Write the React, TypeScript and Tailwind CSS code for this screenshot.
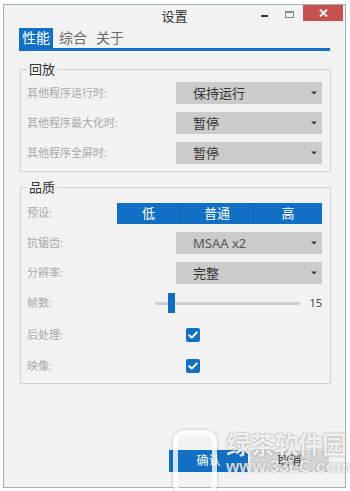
import React from "react";

const FONT = "font-['Noto_Sans','Noto_Sans_CJK_SC',sans-serif]";

function Caret() {
  return (
    <svg width="6" height="4" viewBox="0 0 6 4" className="shrink-0">
      <path d="M0 0.5h6L3 3.5z" fill="#3a3a3a" />
    </svg>
  );
}

function Dropdown({ value, tone = "text-[#333]" }: { value: string; tone?: string }) {
  return (
    <div className="flex h-[22px] w-[146px] items-center justify-between bg-[#cbcbcb] pl-[17px] pr-[5px]">
      <span className={`text-[13px] leading-[22px] ${tone}`}>{value}</span>
      <Caret />
    </div>
  );
}

function Label({ children, className = "" }: { children: React.ReactNode; className?: string }) {
  return <span className={`text-[11px] leading-[22px] text-[#a9a9a9] ${className}`}>{children}</span>;
}

function Check() {
  return (
    <div className="flex h-[14px] w-[14px] items-center justify-center rounded-[2px] bg-[#1270c4]">
      <svg width="10" height="8" viewBox="0 0 10 8">
        <path d="M1.2 4.2l2.6 2.4L8.8 1.4" fill="none" stroke="#fff" strokeWidth="2" strokeLinecap="round" strokeLinejoin="round" />
      </svg>
    </div>
  );
}

export default function App() {
  return (
    <div className={`relative h-[491px] w-[350px] overflow-hidden bg-white ${FONT}`}>
      <div className="ml-[3px] mt-[4px] flex h-[484px] w-[343px] flex-col border border-[#9fb2c0] bg-[#f2f2f2]">
        {/* title bar */}
        <div className="relative flex h-[23px] items-start justify-center">
          <span className="mt-[2px] text-[13px] leading-[18px] text-[#333]">设置</span>
          <div className="absolute right-[2px] top-0 flex items-start">
            <div className="mr-[17px] mt-[10px] h-[2px] w-[7px] bg-[#3a3a3a]" />
            <div className="mr-[9px] mt-[6px] h-[7px] w-[9px] border border-[#8a8a8a] border-t-2" />
            <div className="flex h-[16px] w-[40px] items-center justify-center bg-[#c75050]">
              <svg width="9" height="8" viewBox="0 0 9 8">
                <path d="M1 0.5l7 7M8 0.5l-7 7" stroke="#fff" strokeWidth="1.8" />
              </svg>
            </div>
          </div>
        </div>

        {/* tabs */}
        <div className="ml-[15px] flex w-[311px] gap-[3px] border-b-[3px] border-[#1270c4]">
          <span className="bg-[#1270c4] px-[3px] text-[14px] leading-[20px] text-white">性能</span>
          <span className="px-[3px] text-[14px] leading-[20px] text-[#6a6a6a]">综合</span>
          <span className="px-[3px] text-[14px] leading-[20px] text-[#6a6a6a]">关于</span>
        </div>

        {/* 回放 */}
        <fieldset className="ml-[16px] mt-[10px] w-[311px] border border-[#d3d3d3] px-[6px] pb-[7px] pt-[5px] pr-[8px]">
          <legend className="px-[2px] text-[13px] leading-[16px] text-[#333]">回放</legend>
          <div className="flex flex-col gap-[8px]">
            <div className="flex items-center justify-between">
              <Label>其他程序运行时:</Label>
              <Dropdown value="保持运行" />
            </div>
            <div className="flex items-center justify-between">
              <Label>其他程序最大化时:</Label>
              <Dropdown value="暂停" />
            </div>
            <div className="flex items-center justify-between">
              <Label>其他程序全屏时:</Label>
              <Dropdown value="暂停" />
            </div>
          </div>
        </fieldset>

        {/* 品质 */}
        <fieldset className="ml-[16px] mt-[7px] w-[311px] border border-[#d3d3d3] pb-[6px] pl-[6px] pr-[8px] pt-[7px]">
          <legend className="px-[2px] text-[13px] leading-[16px] text-[#333]">品质</legend>
          <div className="flex flex-col">
            <div className="flex h-[22px] items-center justify-between">
              <Label>预设:</Label>
              <div className="flex h-[21px] w-[205px] bg-[#1270c4] text-[13px] leading-[21px] text-white">
                <span className="w-[64px] border-r border-[#0e63ad] text-center">低</span>
                <span className="w-[73px] border-r border-[#0e63ad] text-center">普通</span>
                <span className="flex-1 text-center">高</span>
              </div>
            </div>
            <div className="mt-[8px] flex items-center justify-between">
              <Label>抗锯齿:</Label>
              <Dropdown value="MSAA x2" tone="text-[#555]" />
            </div>
            <div className="mt-[8px] flex items-center justify-between">
              <Label>分辨率:</Label>
              <Dropdown value="完整" />
            </div>
            <div className="mt-[8px] flex h-[22px] items-center">
              <Label className="w-[128px]">帧数:</Label>
              <div className="relative h-[3px] w-[145px] bg-[#cfcfcf]">
                <div className="absolute left-[13px] top-[-9px] h-[20px] w-[7px] bg-[#1270c4]" />
              </div>
              <span className="ml-auto text-[11px] leading-[22px] text-[#444]">15</span>
            </div>
            <div className="mt-[10px] flex h-[22px] items-center">
              <Label className="w-[159px]">后处理:</Label>
              <Check />
            </div>
            <div className="mt-[9px] flex h-[22px] items-center">
              <Label className="w-[159px]">映像:</Label>
              <Check />
            </div>
          </div>
        </fieldset>

        {/* buttons */}
        <div className="mb-[15px] mr-[16px] mt-auto flex justify-end gap-[2px]">
          <div className="flex h-[22px] w-[79px] items-center justify-center bg-[#1270c4] text-[12px] text-white">确认</div>
          <div className="flex h-[22px] w-[79px] items-center justify-center bg-[#d6d6d6] text-[12px] text-[#333]">取消</div>
        </div>
      </div>

      {/* watermark */}
      <div className="pointer-events-none absolute left-[173px] top-[430px] h-[66px] w-[44px] rounded-[12px] border-[5px] border-white/80 shadow-[0_0_3px_rgba(0,0,0,0.25)]" />
      <div className="pointer-events-none absolute left-[226px] top-[426px] flex flex-col font-['Noto_Sans_CJK_SC',sans-serif]">
        <span className="text-[25px] font-bold leading-[34px] tracking-[-1px] text-white/85 [text-shadow:0_0_2px_rgba(0,0,0,0.45)]">绿茶软件园</span>
        <span className="-mt-[4px] font-['Liberation_Sans',sans-serif] text-[17px] font-bold leading-[22px] text-white/80 [text-shadow:0_0_2px_rgba(0,0,0,0.4)]">www.33LC.com</span>
      </div>
    </div>
  );
}
